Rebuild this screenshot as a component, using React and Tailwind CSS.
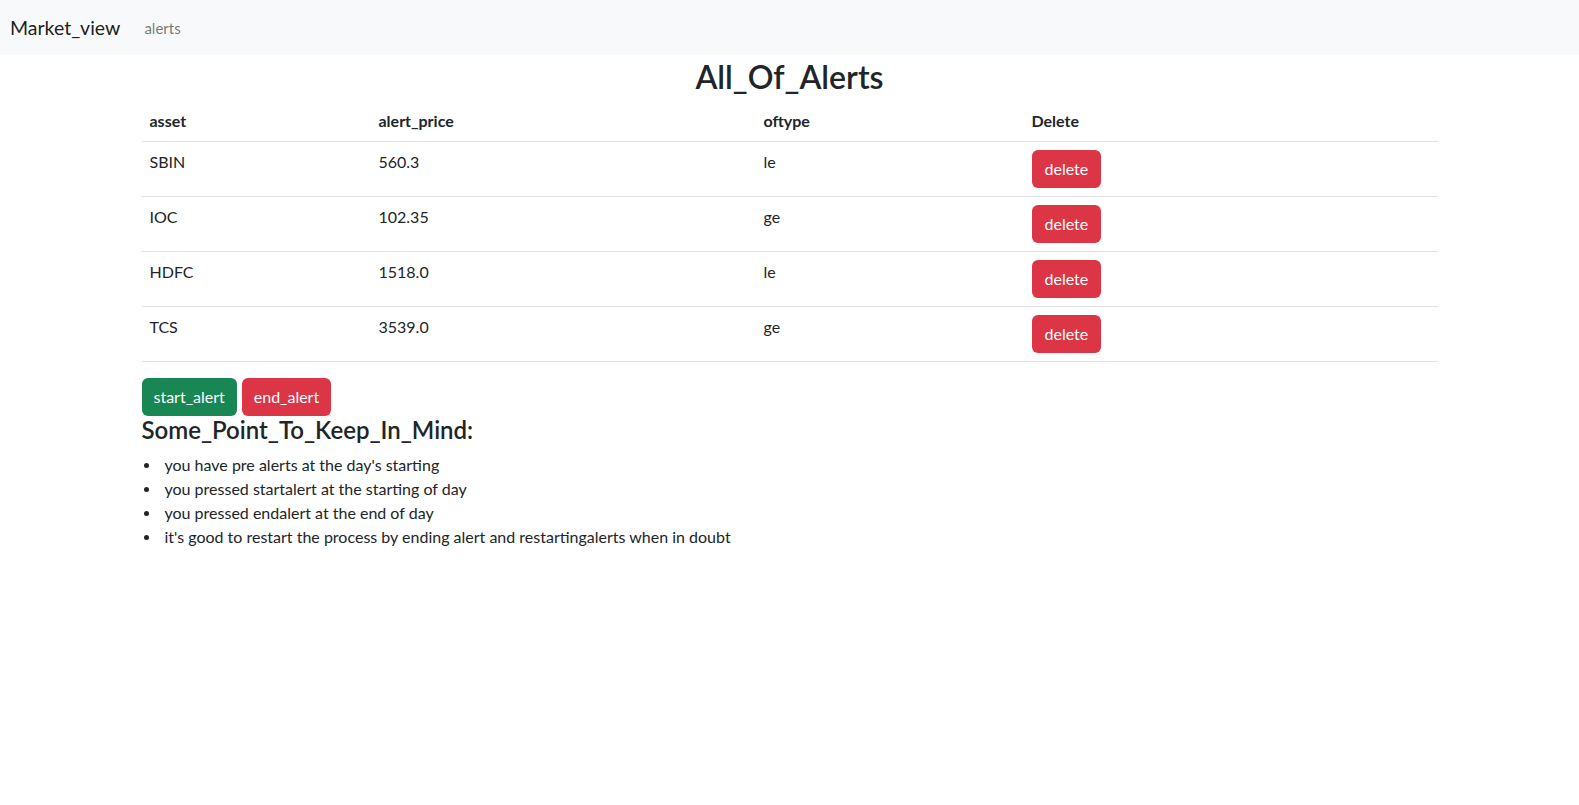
import React from 'react';

const alerts = [
  { asset: 'SBIN', price: '560.3', type: 'le' },
  { asset: 'IOC', price: '102.35', type: 'ge' },
  { asset: 'HDFC', price: '1518.0', type: 'le' },
  { asset: 'TCS', price: '3539.0', type: 'ge' },
];

const points = [
  "you have pre alerts at the day's starting",
  'you pressed startalert at the starting of day',
  'you pressed endalert at the end of day',
  "it's good to restart the process by ending alert and restartingalerts when in doubt",
];

export default function App() {
  return (
    <div className="min-h-screen bg-white text-[#212529] text-base leading-6" style={{ fontFamily: 'Lato, "Noto Sans", sans-serif' }}>
      <nav className="bg-[#f8f9fa] h-[55px] flex items-center pl-[10px]">
        <span className="text-[19.5px] text-black/90 mr-4">Market_view</span>
        <span className="text-[15px] text-black/55 px-2">alerts</span>
      </nav>

      <div className="max-w-[1320px] mx-auto px-3">
        <h2 className="text-[32px] font-semibold leading-[1.2] text-center mb-[5px] pt-[3px]">All_Of_Alerts</h2>

        <table className="w-full mb-4 align-top border-collapse">
          <thead>
            <tr className="border-b border-[#dee2e6]">
              <th className="w-[229px] text-left font-bold p-2">asset</th>
              <th className="w-[385px] text-left font-bold p-2">alert_price</th>
              <th className="w-[268px] text-left font-bold p-2">oftype</th>
              <th className="text-left font-bold p-2">Delete</th>
            </tr>
          </thead>
          <tbody>
            {alerts.map(a => (
              <tr key={a.asset} className="border-b border-[#dee2e6]">
                <td className="p-2 align-top">{a.asset}</td>
                <td className="p-2 align-top">{a.price}</td>
                <td className="p-2 align-top">{a.type}</td>
                <td className="p-2 align-top">
                  <button className="block bg-[#dc3545] text-white rounded-md px-[13px] h-[38px] text-base">delete</button>
                </td>
              </tr>
            ))}
          </tbody>
        </table>

        <div className="flex gap-[5px]">
          <button className="bg-[#198754] text-white rounded-md px-3 h-[38px] text-base">start_alert</button>
          <button className="bg-[#dc3545] text-white rounded-md px-3 h-[38px] text-base">end_alert</button>
        </div>

        <h4 className="text-[24px] font-semibold leading-[1.2] mb-2">Some_Point_To_Keep_In_Mind:</h4>
        <ul>
          {points.map(p => (
            <li key={p} className="flex items-center">
              <span className="w-[5px] h-[5px] rounded-full bg-[#212529] ml-[2px] mr-[16px]" />
              <span>{p}</span>
            </li>
          ))}
        </ul>
      </div>
    </div>
  );
}
